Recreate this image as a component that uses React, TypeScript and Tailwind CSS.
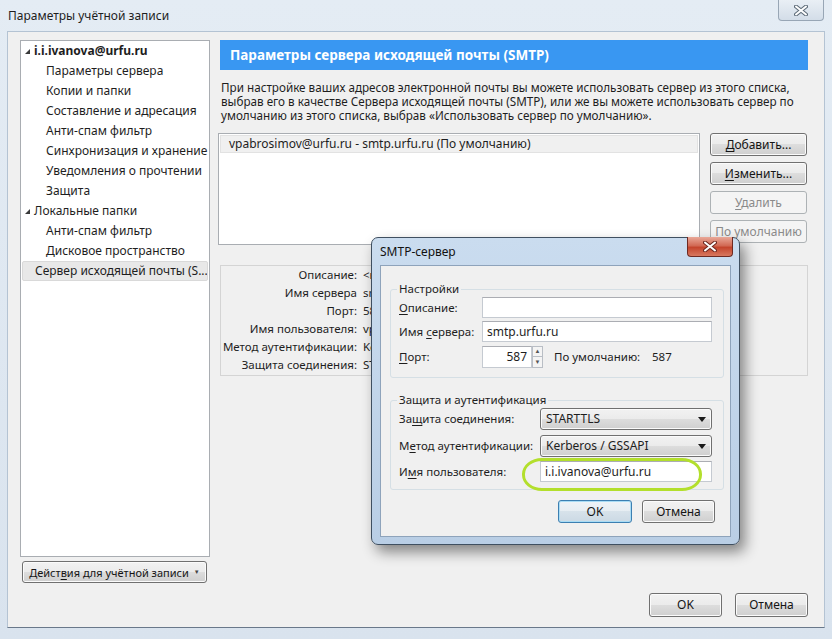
import React from "react";

const font = "font-['Noto_Sans',sans-serif]";
const btnBase =
  "flex items-center justify-center whitespace-nowrap rounded-[3px] border leading-none";
const btnNormal =
  "border-[#707070] bg-[linear-gradient(#f2f2f2,#ebebeb_50%,#dddddd_50%,#cfcfcf)] text-[#151515] shadow-[inset_0_0_0_1px_#fbfbfb]";
const btnDisabled = "border-[#adb2b5] bg-[#f4f4f4] text-[#8a8a8a]";
const btnDefault =
  "border-[#3c7fb1] bg-[linear-gradient(#eef3f7,#e6edf2_50%,#d7e2ea_50%,#cbd9e4)] text-[#151515] shadow-[inset_0_0_0_1px_#a9dcf5]";

function U({ children }: { children: React.ReactNode }) {
  return <span className="underline underline-offset-2">{children}</span>;
}

function Tri() {
  return (
    <svg width="7" height="7" viewBox="0 0 7 7" className="shrink-0">
      <polygon points="6,1 6,6 1,6" fill="#3a3a3a" />
    </svg>
  );
}

function CloseGlyph() {
  return (
    <svg width="14" height="11" viewBox="0 0 14 11">
      <path d="M2 1.5 L12 9.5 M12 1.5 L2 9.5" stroke="#5d6b78" strokeWidth="4" strokeLinecap="round" />
      <path d="M2 1.5 L12 9.5 M12 1.5 L2 9.5" stroke="#ffffff" strokeWidth="2" strokeLinecap="round" />
    </svg>
  );
}

function CloseGlyphRed() {
  return (
    <svg width="14" height="11" viewBox="0 0 14 11">
      <path d="M2 1.5 L12 9.5 M12 1.5 L2 9.5" stroke="#6e2a22" strokeWidth="4" strokeLinecap="round" />
      <path d="M2 1.5 L12 9.5 M12 1.5 L2 9.5" stroke="#ffffff" strokeWidth="2" strokeLinecap="round" />
    </svg>
  );
}

function Arrow() {
  return (
    <svg width="8" height="5" viewBox="0 0 8 5">
      <polygon points="0,0 8,0 4,5" fill="#1a1a1a" />
    </svg>
  );
}

function Select({ value }: { value: string }) {
  return (
    <div className="flex w-[172px] h-[22px] shrink-0 items-center justify-between rounded-[3px] border border-[#707070] bg-[linear-gradient(#f2f2f2,#ebebeb_50%,#dddddd_50%,#cfcfcf)] pl-[5px] pr-[5px] shadow-[inset_0_0_0_1px_#fbfbfb] text-[12px]">
      <span className="whitespace-nowrap">{value}</span>
      <Arrow />
    </div>
  );
}

const inputCls =
  "flex shrink-0 items-center whitespace-nowrap bg-white border border-[#c5cad1] border-t-[#abadb3] px-[4px] text-[12px]";

const treeChildren1 = [
  "Параметры сервера",
  "Копии и папки",
  "Составление и адресация",
  "Анти-спам фильтр",
  "Синхронизация и хранение",
  "Уведомления о прочтении",
  "Защита",
];

const details: [string, string][] = [
  ["Описание:", "<не указано>"],
  ["Имя сервера", "smtp.urfu.ru"],
  ["Порт:", "587"],
  ["Имя пользователя:", "vpabrosimov@urfu.ru"],
  ["Метод аутентификации:", "Kerberos / GSSAPI"],
  ["Защита соединения:", "STARTTLS"],
];

export default function App() {
  return (
    <div
      className={`relative w-[832px] h-[639px] overflow-hidden bg-[linear-gradient(#e4ecf4,#d9e3ee)] ${font} text-[12px] text-[#1e1e1e]`}
    >
      {/* title bar */}
      <div className="h-[31px] flex items-center pl-[8px] whitespace-nowrap">Параметры учётной записи</div>
      <div className="absolute right-[8px] top-0 flex h-[21px] w-[46px] items-center justify-center rounded-b-[4px] border border-t-0 border-[#98a6b5] bg-[linear-gradient(#e9eff5,#d3dde8)]">
        <CloseGlyph />
      </div>

      {/* client area */}
      <div className="mx-[7px] flex h-[597px] flex-col border border-[#b4c3d3] border-b-[#69788a] bg-[#f0f0f0] pl-[12px] pt-[8px]">
        <div className="flex h-[543px]">
          {/* left column */}
          <div className="flex w-[190px] shrink-0 flex-col">
            <div className="h-[517px] w-[190px] border border-[#a9adb2] bg-white">
              <div className="flex h-[20px] items-center gap-[3px] pl-[3px] font-bold whitespace-nowrap">
                <Tri />
                <span>i.i.ivanova@urfu.ru</span>
              </div>
              {treeChildren1.map((t) => (
                <div key={t} className="flex h-[20px] items-center pl-[25px] whitespace-nowrap">
                  {t}
                </div>
              ))}
              <div className="flex h-[20px] items-center gap-[3px] pl-[3px] whitespace-nowrap">
                <Tri />
                <span>Локальные папки</span>
              </div>
              <div className="flex h-[20px] items-center pl-[25px] whitespace-nowrap">Анти-спам фильтр</div>
              <div className="flex h-[20px] items-center pl-[25px] whitespace-nowrap">Дисковое пространство</div>
              <div className="ml-[1px] flex h-[20px] w-[186px] items-center overflow-hidden whitespace-nowrap rounded-[2px] border border-[#d9d9d9] bg-[#e8e8e8] pl-[12px]">
                Сервер исходящей почты (S...
              </div>
            </div>
            <div className={`${btnBase} ${btnNormal} ml-[2px] mt-[4px] h-[22px] w-[185px] text-[11px]`}>
              <span>
                Дейст<U>в</U>ия для учётной записи
              </span>
              <span className="ml-[5px] text-[6px] text-[#444]">▼</span>
            </div>
          </div>

          {/* right column */}
          <div className="ml-[8px] flex w-[590px] shrink-0 flex-col">
            <div className="ml-[2px] flex h-[30px] w-[588px] items-center whitespace-nowrap bg-[#3997f2] pl-[10px] text-[13.5px] font-bold text-white">
              Параметры сервера исходящей почты (SMTP)
            </div>
            <div className="mt-[10px] pl-[3px] leading-[14px] text-[11.7px] whitespace-nowrap">
              <div>При настройке ваших адресов электронной почты вы можете использовать сервер из этого списка,</div>
              <div>выбрав его в качестве Сервера исходящей почты (SMTP), или же вы можете использовать сервер по</div>
              <div>умолчанию из этого списка, выбрав «Использовать сервер по умолчанию».</div>
            </div>
            <div className="mt-[11px] flex">
              <div className="h-[112px] w-[482px] border border-[#a9adb2] bg-white p-[1px]">
                <div className="flex h-[18px] items-center whitespace-nowrap border border-[#e2e2e2] bg-[#f0f0f0] pl-[8px]">
                  vpabrosimov@urfu.ru - smtp.urfu.ru (По умолчанию)
                </div>
              </div>
              <div className="ml-[10px] flex flex-col gap-[6px] text-[12px]">
                <div className={`${btnBase} ${btnNormal} h-[23px] w-[97px]`}>
                  <span>
                    <U>Д</U>обавить...
                  </span>
                </div>
                <div className={`${btnBase} ${btnNormal} h-[23px] w-[97px]`}>
                  <span>
                    <U>И</U>зменить...
                  </span>
                </div>
                <div className={`${btnBase} ${btnDisabled} h-[23px] w-[97px]`}>
                  <span>
                    <U>У</U>далить
                  </span>
                </div>
                <div className={`${btnBase} ${btnDisabled} h-[23px] w-[97px]`}>
                  <span>
                    <U>П</U>о умолчанию
                  </span>
                </div>
              </div>
            </div>
            <div className="ml-[2px] mt-[20px] flex h-[111px] w-[588px] border border-[#d4d4d4] text-[11.5px]">
              <div className="w-[136px] shrink-0 leading-[18px]">
                {details.map(([l]) => (
                  <div key={l} className="flex justify-end whitespace-nowrap">
                    <span>{l}</span>
                  </div>
                ))}
              </div>
              <div className="ml-[6px] leading-[18px]">
                {details.map(([l, v]) => (
                  <div key={l} className="whitespace-nowrap">
                    {v}
                  </div>
                ))}
              </div>
            </div>
          </div>
        </div>

        {/* bottom buttons */}
        <div className="mt-[10px] flex justify-end gap-[13px] pr-[16px] text-[12px]">
          <div className={`${btnBase} ${btnNormal} h-[24px] w-[73px]`}>OK</div>
          <div className={`${btnBase} ${btnNormal} h-[24px] w-[73px]`}>Отмена</div>
        </div>
      </div>

      {/* SMTP dialog */}
      <div className="absolute left-[371px] top-[237px] flex h-[308px] w-[369px] flex-col rounded-[7px] border border-[#3f4f60] bg-[linear-gradient(#cadcef,#b9cee5)] shadow-[5px_7px_14px_rgba(0,0,0,0.45)]">
        <div className="flex h-[27px] items-center pl-[8px] text-[12px] text-[#111]">SMTP-сервер</div>
        <div className="absolute right-[6px] top-[-1px] flex h-[20px] w-[46px] items-center justify-center rounded-b-[4px] border border-t-0 border-[#6e2a22] bg-[linear-gradient(#e9a898,#d26a55_45%,#c4452d_55%,#d8785f)]">
          <CloseGlyphRed />
        </div>
        <div className="mx-[8px] h-[272px] border border-[#8ea3bb] bg-[#f0f0f0] text-[11.5px]">
          {/* group 1 */}
          <div className="relative ml-[9px] mt-[23px] h-[89px] w-[334px] rounded-[3px] border border-[#d5dfe5] pl-[8px] pt-[7px]">
            <div className="absolute left-[6px] top-[-9px] whitespace-nowrap bg-[#f0f0f0] px-[2px] leading-[16px]">Настройки</div>
            <div className="flex h-[21px] items-center">
              <div className="w-[83px] shrink-0 whitespace-nowrap">
                <U>О</U>писание:
              </div>
              <div className={`${inputCls} h-[21px] w-[230px]`}></div>
            </div>
            <div className="mt-[3px] flex h-[21px] items-center">
              <div className="w-[83px] shrink-0 whitespace-nowrap">
                Имя <U>с</U>ервера:
              </div>
              <div className={`${inputCls} h-[21px] w-[230px]`}>smtp.urfu.ru</div>
            </div>
            <div className="mt-[4px] flex h-[22px] items-center">
              <div className="w-[83px] shrink-0 whitespace-nowrap">
                <U>П</U>орт:
              </div>
              <div className={`${inputCls} h-[22px] w-[50px] justify-end`}>587</div>
              <div className="flex h-[22px] w-[11px] shrink-0 flex-col">
                <div className="flex h-[11px] items-center justify-center border border-[#b9bec5] bg-[#f4f4f4] text-[6px] text-[#555]">▲</div>
                <div className="flex h-[11px] items-center justify-center border border-t-0 border-[#b9bec5] bg-[#f4f4f4] text-[6px] text-[#555]">▼</div>
              </div>
              <div className="ml-[11px] w-[98px] shrink-0 whitespace-nowrap">По умолчанию:</div>
              <div>587</div>
            </div>
          </div>

          {/* group 2 */}
          <div className="relative ml-[9px] mt-[22px] h-[90px] w-[334px] rounded-[3px] border border-[#d5dfe5] pl-[8px] pt-[7px]">
            <div className="absolute left-[6px] top-[-9px] whitespace-nowrap bg-[#f0f0f0] px-[2px] leading-[16px]">Защита и аутентификация</div>
            <div className="flex h-[22px] items-center">
              <div className="w-[141px] shrink-0 whitespace-nowrap">
                За<U>щ</U>ита соединения:
              </div>
              <Select value="STARTTLS" />
            </div>
            <div className="mt-[5px] flex h-[22px] items-center">
              <div className="w-[141px] shrink-0 whitespace-nowrap">
                М<U>е</U>тод аутентификации:
              </div>
              <Select value="Kerberos / GSSAPI" />
            </div>
            <div className="mt-[4px] flex h-[21px] items-center">
              <div className="w-[141px] shrink-0 whitespace-nowrap">
                И<U>м</U>я пользователя:
              </div>
              <div className={`${inputCls} h-[21px] w-[172px]`}>i.i.ivanova@urfu.ru</div>
            </div>
          </div>

          {/* buttons */}
          <div className="mt-[10px] flex justify-end gap-[10px] pr-[15px] text-[12px]">
            <div className={`${btnBase} ${btnDefault} h-[23px] w-[74px]`}>OK</div>
            <div className={`${btnBase} ${btnNormal} h-[23px] w-[73px]`}>Отмена</div>
          </div>
        </div>

        {/* green highlight */}
        <div className="absolute left-[150px] top-[220px] h-[33px] w-[180px] rounded-[20px/16px] border-[3px] border-[#b3df2c]"></div>
      </div>
    </div>
  );
}
